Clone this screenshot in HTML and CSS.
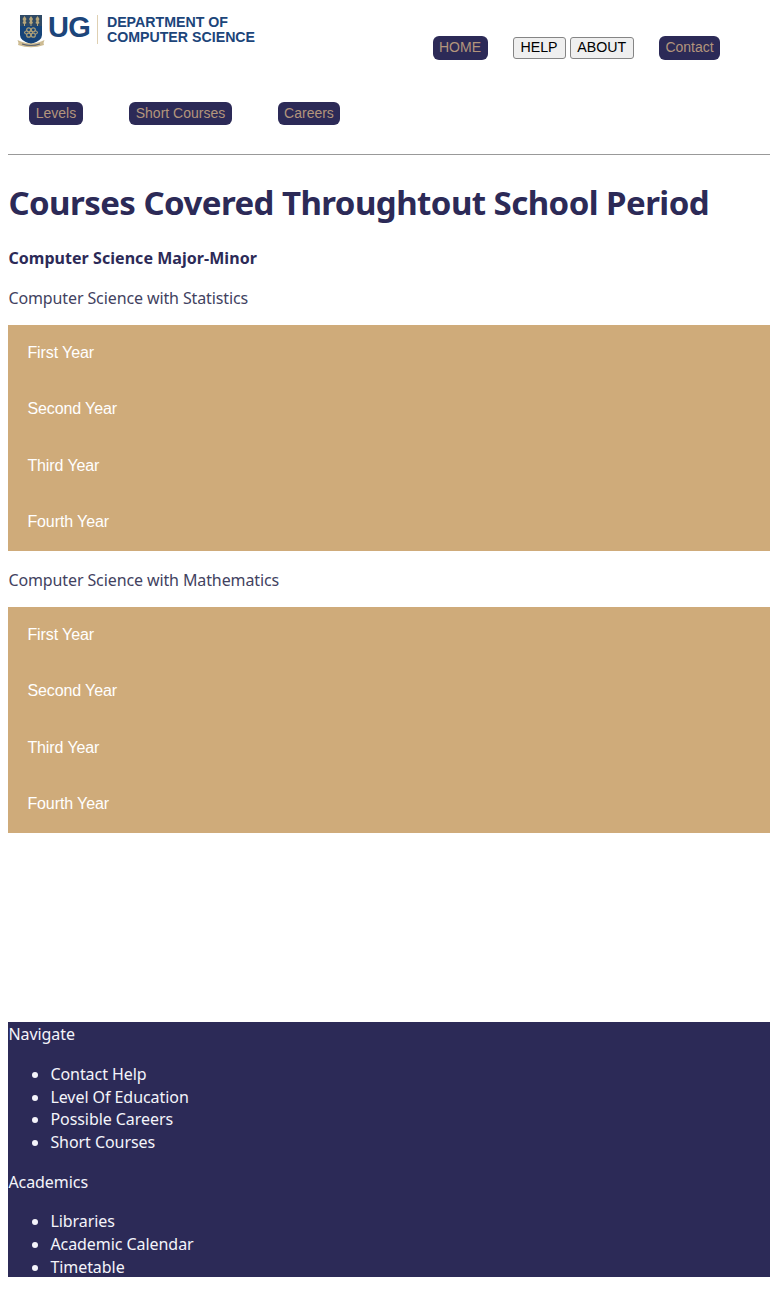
FILE: index.html
```html
<!DOCTYPE html>
<html lang="en">
<head>
<meta charset="utf-8">
<title>Department of Computer Science</title>
<link rel="stylesheet" href="styles.css">
</head>
<body>
<header class="header">
  <div class="top-row">
    <div class="logo">
      <svg class="crest" width="28" height="34" viewBox="0 0 28 34">
        <path d="M3 1h22v20q0 6-11 9Q3 27 3 21z" fill="#164479"/>
        <path d="M3 1h22v11H3z" fill="#2f4a66"/>
        <g fill="#b8a77b">
          <path d="M7.500 2l2 3-1 2 1 2-1.500 1v2H7v-2L5.500 9l1-2-1-2zM14 2l2 3-1 2 1 2-1.500 1v2h-1v-2L12 9l1-2-1-2zM20.500 2l2 3-1 2 1 2-1.500 1v2h-1v-2l-1.500-1 1-2-1-2z"/>
        </g>
        <g fill="none" stroke="#a99d77" stroke-width="1.200">
          <circle cx="14" cy="18.500" r="1.500"/>
          <circle cx="11.700" cy="15.800" r="2"/><circle cx="16.300" cy="15.800" r="2"/>
          <circle cx="11.700" cy="21.200" r="2"/><circle cx="16.300" cy="21.200" r="2"/>
          <path d="M10 16.500q-5 2 0 4M18 16.500q5 2 0 4"/>
        </g>
        <path d="M.5 26l3.500 1.500q10 4 20 0l3.500-1.500-1 3 .5 2q-13 4.500-26 0l.5-2z" fill="#cdbb92"/>
        <path d="M5 30q9 3 18 0" fill="none" stroke="#5d6470" stroke-width="1.200"/>
      </svg>
      <span class="ug">UG</span>
      <span class="divider"></span>
      <span class="dept">DEPARTMENT OF<br>COMPUTER SCIENCE</span>
    </div>
    <nav class="main-nav">
      <a class="pill home">HOME</a>
      <div class="buttons"><button class="btn help">HELP</button><button class="btn about">ABOUT</button></div>
      <a class="pill contact">Contact</a>
    </nav>
  </div>
  <nav class="sub-nav">
    <a class="pill levels">Levels</a>
    <a class="pill short">Short Courses</a>
    <a class="pill careers">Careers</a>
  </nav>
</header>
<main>
  <h1 class="title">Courses Covered Throughtout School Period</h1>
  <h2 class="subtitle">Computer Science Major-Minor</h2>
  <p class="program">Computer Science with Statistics</p>
  <div class="years">
    <button class="year">First Year</button>
    <button class="year">Second Year</button>
    <button class="year">Third Year</button>
    <button class="year">Fourth Year</button>
  </div>
  <p class="program second">Computer Science with Mathematics</p>
  <div class="years">
    <button class="year">First Year</button>
    <button class="year">Second Year</button>
    <button class="year">Third Year</button>
    <button class="year">Fourth Year</button>
  </div>
</main>
<footer class="footer">
  <p class="group">Navigate</p>
  <ul class="links">
    <li>Contact Help</li><li>Level Of Education</li><li>Possible Careers</li><li>Short Courses</li>
  </ul>
  <p class="group">Academics</p>
  <ul class="links">
    <li>Libraries</li><li>Academic Calendar</li><li>Timetable</li>
  </ul>
</footer>
</body>
</html>
```
FILE: styles.css
```css
* { box-sizing: border-box; }
body {
  margin: 0 0 0 8.400px;
  background: #fff;
  color: #2c2a57;
  font-family: "Segoe UI", "Noto Sans", sans-serif;
  font-size: 16px;
  overflow-x: hidden;
}
.header { height: 155px; border-bottom: 1px solid #999; }
.top-row { display: flex; justify-content: space-between; height: 102px; padding-right: 50px; }
.logo { display: flex; align-items: flex-start; padding: 14px 0 0 8.600px; color: #1c457a; font-family: "Liberation Sans", Arial, sans-serif; font-weight: bold; }
.ug { margin-left: 3px; font-size: 29px; line-height: 27px; letter-spacing: -0.8px; }
.divider { width: 1px; height: 29px; margin: 1px 9px 0 7px; background: #dfd0b2; }
.dept { padding-top: 1px; font-size: 14.200px; line-height: 15px; white-space: nowrap; }
.main-nav { display: flex; align-items: flex-start; padding-top: 36px; }
.pill { display: block; height: 23px; border-radius: 6px; background: #2c2a57; color: #b3957c; font: 14px/22px "Liberation Sans", Arial, sans-serif; text-align: center; }
.home { width: 55px; height: 24px; }
.contact { width: 61px; height: 24px; }
.buttons { display: flex; gap: 4px; margin: 1px 25px 0 25px; }
.main-nav .home { margin-left: 0; }
.btn { height: 22px; padding: 0; border: 1px solid #858585; border-radius: 3px; background: #efefef; color: #000; font: 14.200px/17px "Liberation Sans", Arial, sans-serif; padding-bottom: 1px; }
.help { width: 53px; }
.about { width: 64.500px; }
.sub-nav { display: flex; padding-left: 20.600px; gap: 46px; }
.levels { width: 54px; }
.short { width: 103px; }
.careers { width: 62px; }
.title { margin: 25px 0 0; font-size: 33px; line-height: 46px; letter-spacing: -0.550px; white-space: nowrap; }
.subtitle { margin: 21px 0 0; font-size: 16px; line-height: 23px; letter-spacing: 0.050px; }
.program { margin: 17px 0 15px; line-height: 23px; letter-spacing: -0.110px; color: #42425f; }
.second { margin: 18px 0 15px; }
.years { height: 225.500px; background: #cfab7a; }
.second + .years { margin-top: 15.500px; }
.year { display: block; width: 100%; height: 56.300px; padding: 0 19px; border: 0; background: transparent; color: #fff; font: 16px/56px "Liberation Sans", Arial, sans-serif; letter-spacing: -0.100px; text-align: left; }
.footer { height: 255px; margin-top: 189.500px; background: #2c2a57; color: #f4f4fa; line-height: 22.700px; letter-spacing: -0.060px; }
.group { margin: 0; padding-top: 1.200px; }
.links { margin: 17px 0; padding-left: 42px; }
.links + .group { padding-top: 0; }
```
